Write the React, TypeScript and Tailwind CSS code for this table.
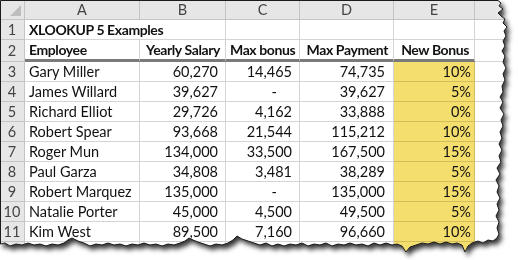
import type { CSSProperties } from 'react';

type Row = {
  n: number;
  name: string;
  salary: string;
  bonus: string;
  payment: string;
  pct: string;
};

const ROWS: Row[] = [
  { n: 3, name: 'Gary Miller', salary: '60,270', bonus: '14,465', payment: '74,735', pct: '10%' },
  { n: 4, name: 'James Willard', salary: '39,627', bonus: '-', payment: '39,627', pct: '5%' },
  { n: 5, name: 'Richard Elliot', salary: '29,726', bonus: '4,162', payment: '33,888', pct: '0%' },
  { n: 6, name: 'Robert Spear', salary: '93,668', bonus: '21,544', payment: '115,212', pct: '10%' },
  { n: 7, name: 'Roger Mun', salary: '134,000', bonus: '33,500', payment: '167,500', pct: '15%' },
  { n: 8, name: 'Paul Garza', salary: '34,808', bonus: '3,481', payment: '38,289', pct: '5%' },
  { n: 9, name: 'Robert Marquez', salary: '135,000', bonus: '-', payment: '135,000', pct: '15%' },
  { n: 10, name: 'Natalie Porter', salary: '45,000', bonus: '4,500', payment: '49,500', pct: '5%' },
  { n: 11, name: 'Kim West', salary: '89,500', bonus: '7,160', payment: '96,660', pct: '10%' },
  { n: 12, name: '', salary: '', bonus: '', payment: '', pct: '' },
];

// torn paper outline, clockwise from top-left
const EDGE: [number, number][] = [
  [0, 0], [498, 0], [501, 3], [499, 6], [503, 9], [498, 13], [501, 16], [505, 19], [503, 23], [507, 27],
  [504, 31], [506, 36], [503, 41], [505, 46], [502, 51], [505, 56], [503, 62], [506, 68], [503, 74],
  [505, 80], [502, 86], [503, 92], [500, 97], [503, 102], [500, 108], [504, 114], [501, 120], [503, 126],
  [500, 132], [502, 138], [499, 144], [502, 150], [499, 156], [501, 162], [497, 168], [500, 174],
  [496, 180], [499, 186], [497, 192], [500, 198], [497, 204], [499, 210], [496, 216], [499, 222],
  [497, 228], [499, 234], [497, 238],
  [493, 241], [488, 240], [483, 243], [478, 241], [472, 243], [468, 246], [465, 252], [462, 245],
  [457, 243], [452, 244], [446, 242], [440, 244], [434, 242], [428, 244], [422, 243], [416, 245],
  [410, 247], [406, 252], [402, 246], [397, 244], [392, 245], [386, 243], [380, 245], [374, 243],
  [368, 246], [362, 244], [356, 245], [350, 243], [344, 245], [338, 244], [332, 246], [326, 243],
  [320, 245], [314, 244], [308, 246], [302, 243], [296, 245], [290, 244], [284, 246], [278, 244],
  [272, 246], [266, 243], [260, 245], [254, 243], [248, 241], [242, 239], [237, 236], [233, 240],
  [228, 243], [222, 245], [216, 244], [210, 246], [204, 244], [198, 242], [193, 240], [189, 238],
  [185, 241], [180, 243], [174, 245], [168, 244], [162, 246], [156, 244], [150, 245], [144, 243],
  [138, 245], [132, 244], [126, 246], [120, 244], [114, 245], [108, 243], [102, 245], [96, 244],
  [90, 246], [84, 243], [78, 241], [72, 238], [68, 240], [64, 243], [58, 245], [52, 244], [46, 246],
  [40, 244], [34, 245], [28, 243], [22, 245], [16, 244], [10, 246], [5, 243], [0, 244],
];

const clipStyle: CSSProperties = {
  clipPath: `polygon(${EDGE.map(([x, y]) => `${x}px ${y}px`).join(', ')})`,
};

const edgePath = EDGE.map(([x, y], i) => `${i === 0 ? 'M' : 'L'}${Math.max(x, 0.5)} ${Math.max(y, 0.5)}`).join(' ') + ' Z';

const cell = 'h-5 border-b border-r border-[#d4d4d4] px-1 leading-[19px] whitespace-nowrap';
const colHead = 'h-5 border-b border-r border-[#c4c4c4] bg-[#e6e6e6] text-center leading-[19px] text-[#444]';
const rowHead = 'border-b border-r border-[#c4c4c4] bg-[#e6e6e6] text-center text-[#444]';
const bold = 'font-bold text-[14px] tracking-[-0.4px]';

export default function App() {
  return (
    <div className="relative h-[260px] w-[518px] overflow-hidden bg-white font-['Lato',sans-serif] text-[14.5px] text-[#111]">
      <div className="absolute inset-0 [filter:drop-shadow(3px_4px_2.5px_rgba(0,0,0,0.8))]">
        <div className="relative h-[255px] w-[512px] bg-white" style={clipStyle}>
          <div className="grid grid-cols-[25px_115px_86px_74px_94px_81px_1fr]">
            {/* column header strip */}
            <div className="relative h-5 border-b border-r border-[#c4c4c4] bg-[#e6e6e6]">
              <div className="absolute bottom-[3px] right-[3px] h-0 w-0 border-t-[11px] border-r-[11px] border-t-transparent border-r-[#bdbdbd]" />
            </div>
            {['A', 'B', 'C', 'D', 'E', ''].map((c, i) => (
              <div key={i} className={colHead}>
                {c}
              </div>
            ))}

            {/* row 1 */}
            <div className={`h-5 leading-[19px] ${rowHead}`}>1</div>
            <div className={`h-5 overflow-visible border-b border-[#d4d4d4] px-1 leading-[19px] whitespace-nowrap ${bold}`}>
              XLOOKUP 5 Examples
            </div>
            <div className={cell} />
            <div className={cell} />
            <div className={cell} />
            <div className={cell} />
            <div className={cell} />

            {/* row 2 - headings with medium bottom border */}
            <div className={`h-[22px] leading-[21px] ${rowHead}`}>2</div>
            {['Employee', 'Yearly Salary', 'Max bonus', 'Max Payment', 'New Bonus'].map((h, i) => (
              <div
                key={h}
                className={`h-[22px] border-b-[3px] border-r border-b-[#7a7a7a] border-r-[#d4d4d4] px-1 leading-[19px] whitespace-nowrap ${bold} ${
                  i === 0 ? 'text-left' : 'pr-[5px] text-right'
                }`}
              >
                {h}
              </div>
            ))}
            <div className="h-[22px] border-b border-r border-[#d4d4d4]" />

            {ROWS.map((r) => (
              <Line key={r.n} row={r} />
            ))}
          </div>
        </div>
      </div>
      <svg className="pointer-events-none absolute inset-0" width={518} height={260}>
        <path d={edgePath} fill="none" stroke="#1b1b1b" strokeWidth={1} />
      </svg>
    </div>
  );
}

function Line({ row }: { row: Row }) {
  const dash = 'pr-[22px]';
  return (
    <>
      <div className={`h-5 leading-[19px] ${rowHead}`}>{row.n}</div>
      <div className={`${cell} text-left`}>{row.name}</div>
      <div className={`${cell} pr-[7px] text-right`}>{row.salary}</div>
      <div className={`${cell} text-right ${row.bonus === '-' ? dash : 'pr-[7px]'}`}>{row.bonus}</div>
      <div className={`${cell} pr-[8px] text-right`}>{row.payment}</div>
      <div className={`${cell} border-b-[#d2bd5a] border-r-[#d2bd5a] bg-[#f4de6d] pr-[3px] text-right`}>{row.pct}</div>
      <div className={cell} />
    </>
  );
}
